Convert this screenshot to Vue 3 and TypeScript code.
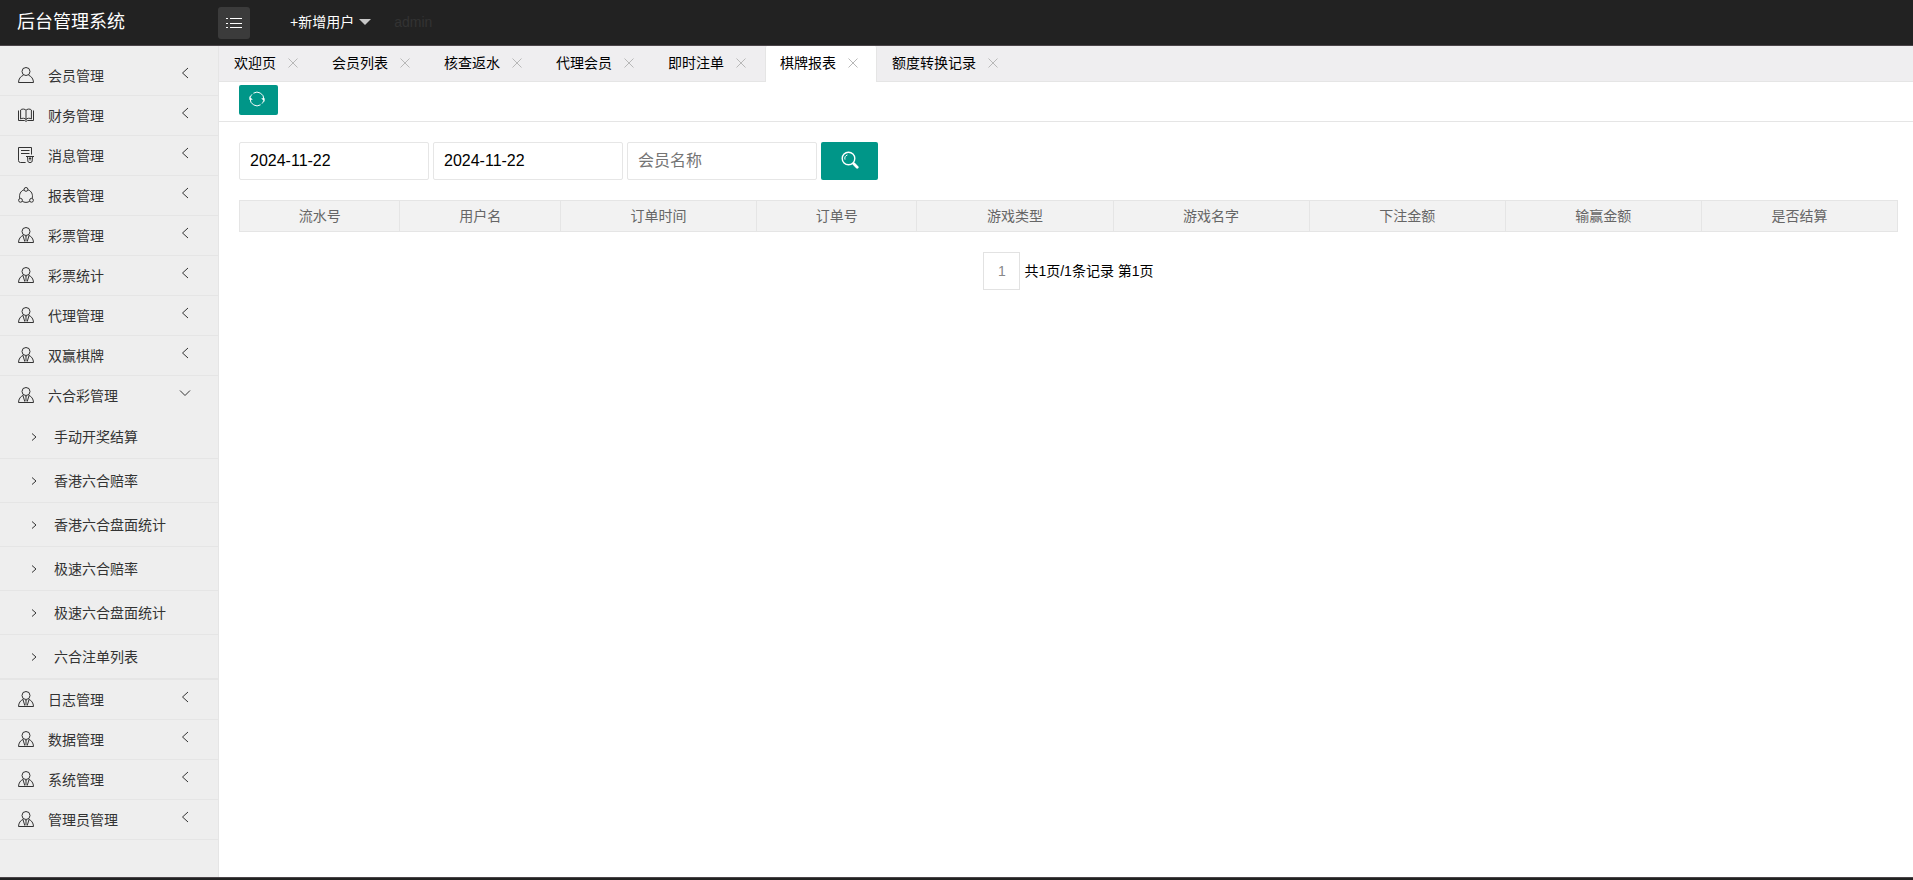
<script setup lang="ts">
import { ref } from 'vue'

type IconName = 'user' | 'book' | 'note' | 'share' | 'agent'

interface MenuItem {
  title: string
  icon: IconName
  children?: string[]
}

const icons: Record<IconName, string[]> = {
  user: [
    'M8 .5a4 4 0 1 0 0 8a4 4 0 1 0 0-8z',
    'M5.4 8.2C2.4 9.4.6 12 .5 15.5h15c-.1-3.5-1.9-6.1-4.9-7.3',
  ],
  book: [
    'M8 3.4C7.4 1.8 3.6 1.6 2.6 3v9c1.4-1.2 4.6-1 5.4.6c.8-1.6 4-1.8 5.4-.6V3C12.4 1.6 8.6 1.8 8 3.4v9.2',
    'M.5 3.5v10M15.5 3.5v10M.5 13.5h6l1.5.8l1.5-.8h6',
  ],
  note: [
    'M7.6 15.5H2.5a2 2 0 0 1-2-2V.5h13v7',
    'M3 3.5h8.5M3 6.5h8.5M8 9.5h8M9.5 9.5l.4 5.2a3 3 0 0 0 4.2 0l.4-5.2M12 9.5v4M10.8 11.5h2.4',
  ],
  share: [
    'M8 .5a1.9 1.9 0 1 0 0 3.8a1.9 1.9 0 1 0 0-3.8zM2.5 11.4a1.9 1.9 0 1 0 0 3.8a1.9 1.9 0 1 0 0-3.8zM13.5 11.4a1.9 1.9 0 1 0 0 3.8a1.9 1.9 0 1 0 0-3.8z',
    'M6.1 2.8C2.6 3.8.8 7.6 1.8 11.3M9.9 2.8c3.5 1 5.3 4.8 4.3 8.5M4.2 14.2c2.2 1.6 5.4 1.6 7.6 0',
  ],
  agent: [
    'M8 .5a4 4 0 1 0 0 8a4 4 0 1 0 0-8z',
    'M5.4 8.2C2.4 9.4.6 12 .5 15.5h15c-.1-3.5-1.9-6.1-4.9-7.3',
    'M5 8.6L6.8 14.6M11 8.6L9.2 14.6M7.5 9.5h1M8 9.5v4.6',
  ],
}

const menu: MenuItem[] = [
  { title: '会员管理', icon: 'user' },
  { title: '财务管理', icon: 'book' },
  { title: '消息管理', icon: 'note' },
  { title: '报表管理', icon: 'share' },
  { title: '彩票管理', icon: 'agent' },
  { title: '彩票统计', icon: 'agent' },
  { title: '代理管理', icon: 'agent' },
  { title: '双赢棋牌', icon: 'agent' },
  {
    title: '六合彩管理',
    icon: 'agent',
    children: ['手动开奖结算', '香港六合赔率', '香港六合盘面统计', '极速六合赔率', '极速六合盘面统计', '六合注单列表'],
  },
  { title: '日志管理', icon: 'agent' },
  { title: '数据管理', icon: 'agent' },
  { title: '系统管理', icon: 'agent' },
  { title: '管理员管理', icon: 'agent' },
]

const tabs = ref(['欢迎页', '会员列表', '核查返水', '代理会员', '即时注单', '棋牌报表', '额度转换记录'])
const activeTab = ref('棋牌报表')
const openMenu = ref('六合彩管理')
const startDate = ref('2024-11-22')
const endDate = ref('2024-11-22')
const memberName = ref('')

const columns = [
  { title: '流水号', wide: false },
  { title: '用户名', wide: false },
  { title: '订单时间', wide: true },
  { title: '订单号', wide: false },
  { title: '游戏类型', wide: true },
  { title: '游戏名字', wide: true },
  { title: '下注金额', wide: true },
  { title: '输赢金额', wide: true },
  { title: '是否结算', wide: true },
]

function toggle(item: MenuItem) {
  openMenu.value = openMenu.value === item.title ? '' : item.title
}

function closeTab(name: string) {
  tabs.value = tabs.value.filter((t) => t !== name)
}
</script>

<template>
  <div class="layout">
    <header class="header">
      <a class="logo" href="#">后台管理系统</a>
      <button class="collapse" type="button" aria-label="菜单">
        <svg width="16" height="16" viewBox="0 0 16 16">
          <path d="M0 3.5h2M4 3.5h12M0 8.5h2M4 8.5h12M0 12.5h2M4 12.5h12" />
        </svg>
      </button>
      <button class="add-user" type="button">+新增用户<i class="caret"></i></button>
      <a class="account" href="#">admin</a>
    </header>

    <div class="body">
      <nav class="sidebar">
        <ul class="menu">
          <li v-for="item in menu" :key="item.title" class="menu-item">
            <button class="menu-title" type="button" @click="toggle(item)">
              <svg class="menu-icon" width="16" height="16" viewBox="0 0 16 16">
                <path v-for="d in icons[item.icon]" :key="d" :d="d" />
              </svg>
              <span class="menu-text">{{ item.title }}</span>
              <svg class="arrow" width="12" height="12" viewBox="0 0 12 12">
                <path :d="item.children && openMenu === item.title ? 'M1 3.5l5 5l5-5' : 'M9 1L3.5 6L9 11'" />
              </svg>
            </button>
            <ul v-if="item.children && openMenu === item.title" class="submenu">
              <li v-for="child in item.children" :key="child">
                <a class="submenu-link" href="#">
                  <svg class="sub-arrow" width="8" height="8" viewBox="0 0 8 8"><path d="M2 .5L6 4L2 7.5" /></svg>
                  <span>{{ child }}</span>
                </a>
              </li>
            </ul>
          </li>
        </ul>
      </nav>

      <main class="content">
        <ul class="tabs">
          <li v-for="tab in tabs" :key="tab" class="tab" :class="{ active: tab === activeTab }">
            <button class="tab-name" type="button" @click="activeTab = tab">{{ tab }}</button>
            <button class="tab-close" type="button" :aria-label="'关闭' + tab" @click="closeTab(tab)">
              <svg width="10" height="10" viewBox="0 0 10 10"><path d="M.5.5l9 9M9.5.5l-9 9" /></svg>
            </button>
          </li>
        </ul>

        <div class="toolbar">
          <button class="btn refresh" type="button" aria-label="刷新">
            <svg width="16" height="16" viewBox="0 0 16 16">
              <path d="M4.4 2.2A6.8 6.8 0 0 1 14.8 8.4M11.6 13.8A6.8 6.8 0 0 1 1.2 7.6M1.3 6.4A6.8 6.8 0 0 1 3 3.4M14.7 9.6A6.8 6.8 0 0 1 13 12.6" />
              <path class="solid" d="M12.2 7.2h3.4v3.6zM3.8 8.8H.4V5.2z" />
            </svg>
          </button>
        </div>

        <div class="page">
          <form class="search" @submit.prevent>
            <input v-model="startDate" class="field" type="text" aria-label="开始日期" />
            <input v-model="endDate" class="field" type="text" aria-label="结束日期" />
            <input v-model="memberName" class="field" type="text" placeholder="会员名称" aria-label="会员名称" />
            <button class="btn submit" type="submit" aria-label="搜索">
              <svg width="18" height="18" viewBox="0 0 18 18">
                <circle class="lens" cx="7.5" cy="7.5" r="6.3" />
                <path d="M4 8.6A3.8 3.8 0 0 1 6.4 4" />
                <path class="handle" d="M12.8 12.8l3.4 3.4" />
              </svg>
            </button>
          </form>

          <table class="table">
            <colgroup>
              <col v-for="c in columns" :key="c.title" :class="c.wide ? 'wide' : 'narrow'" />
            </colgroup>
            <thead>
              <tr>
                <th v-for="c in columns" :key="c.title" scope="col">{{ c.title }}</th>
              </tr>
            </thead>
          </table>

          <div class="pager">
            <a class="page-no" href="#">1</a>
            <span>共1页/1条记录 第1页</span>
          </div>
        </div>
      </main>
    </div>

    <footer class="footer"></footer>
  </div>
</template>

<style>
body {
  margin: 0;
}
</style>

<style scoped>
.layout {
  display: flex;
  flex-direction: column;
  min-height: 100vh;
  font-family: 'Liberation Sans', 'Noto Sans CJK SC', sans-serif;
  font-size: 14px;
  line-height: 20px;
  color: #000;
  background: #fff;
}

.layout *,
.layout {
  box-sizing: border-box;
}

ul {
  list-style: none;
  margin: 0;
  padding: 0;
}

a {
  color: inherit;
  text-decoration: none;
}

button {
  border: 0;
  padding: 0;
  background: none;
  font: inherit;
  color: inherit;
  cursor: pointer;
}

svg {
  display: block;
  fill: none;
  stroke: currentColor;
}

.header {
  display: flex;
  align-items: center;
  height: 46px;
  background: #222;
  border-bottom: 1px solid #4b4549;
  color: #fff;
}

.logo {
  width: 218px;
  padding: 0 0 2px 17px;
  font-size: 18px;
  line-height: 24px;
}

.collapse {
  display: flex;
  align-items: center;
  justify-content: center;
  width: 32px;
  height: 32px;
  border-radius: 3px;
  background: #3b3b3b;
}

.add-user {
  display: flex;
  align-items: center;
  gap: 5px;
  margin-left: 40px;
  padding-bottom: 2px;
}

.caret {
  border: 6px solid transparent;
  border-top-color: #c7c7c7;
  border-bottom: 0;
}

.account {
  margin-left: 23px;
  padding-bottom: 2px;
  color: #333;
}

.body {
  display: flex;
  flex: 1;
}

.sidebar {
  flex: none;
  width: 219px;
  padding-top: 10px;
  background: #eee;
  border-right: 1px solid #e5e5e5;
  color: #333;
}

.menu-item {
  border-bottom: 1px solid #e5e5e5;
}

.menu-title {
  display: flex;
  align-items: center;
  width: 100%;
  height: 39px;
  padding: 0 27px 0 18px;
  text-align: left;
}

.menu-icon {
  margin-bottom: 1px;
}

.menu-text {
  flex: 1;
  margin-left: 14px;
}

.arrow {
  margin-bottom: 6px;
}

.submenu-link {
  display: flex;
  align-items: center;
  gap: 16px;
  height: 44px;
  padding-left: 30px;
  border-bottom: 1px solid #e5e5e5;
}

.content {
  flex: 1;
  min-width: 0;
}

.tabs {
  display: flex;
  height: 36px;
  background: #efeef0;
  border-bottom: 1px solid #e5e5e5;
}

.tab {
  display: flex;
  align-items: center;
  height: 36px;
  padding: 0 15px 2px;
}

.tab.active {
  padding: 0 14px 2px;
  border: 1px solid #e5e5e5;
  border-width: 0 1px;
  border-radius: 2px 2px 0 0;
  background: #fff;
}

.tab-close {
  display: flex;
  align-items: center;
  justify-content: center;
  width: 18px;
  height: 18px;
  margin-left: 8px;
  color: #b8b8b8;
}

.toolbar {
  height: 40px;
  padding: 3px 20px;
  border-bottom: 1px solid #e5e5e5;
}

.btn {
  display: flex;
  align-items: center;
  justify-content: center;
  background: #009688;
  color: #fff;
  border-radius: 2px;
}

.refresh {
  width: 39px;
  height: 30px;
  padding: 0 3px 2px 0;
}

.solid {
  fill: currentColor;
  stroke: none;
}

.page {
  padding: 20px 15px 20px 20px;
}

.search {
  display: flex;
  gap: 4px;
}

.field {
  width: 190px;
  height: 38px;
  padding: 0 10px;
  border: 1px solid #e6e6e6;
  border-radius: 2px;
  background: #fff;
  font: inherit;
  font-size: 16px;
  color: #000;
}

.field::placeholder {
  color: #757575;
  opacity: 1;
}

.submit {
  width: 57px;
  height: 38px;
  padding-bottom: 2px;
}

.lens {
  stroke-width: 1.4;
}

.handle {
  stroke-width: 2.8;
  stroke-linecap: round;
}

.table {
  width: 100%;
  margin-top: 20px;
  border-collapse: collapse;
  table-layout: fixed;
}

.narrow {
  width: 9.68%;
}

.wide {
  width: 11.83%;
}

.table th {
  height: 31px;
  padding: 0;
  border: 1px solid #e5e5e5;
  background: #f2f2f2;
  color: #666;
  font-weight: 400;
  text-align: center;
}

.pager {
  display: flex;
  align-items: center;
  justify-content: center;
  gap: 4px;
  margin-top: 20px;
}

.page-no {
  width: 37px;
  border: 1px solid #e2e2e2;
  line-height: 36px;
  text-align: center;
  color: #888;
}

.footer {
  height: 3px;
  background: #222;
  border-top: 1px solid #4b4549;
}
</style>
